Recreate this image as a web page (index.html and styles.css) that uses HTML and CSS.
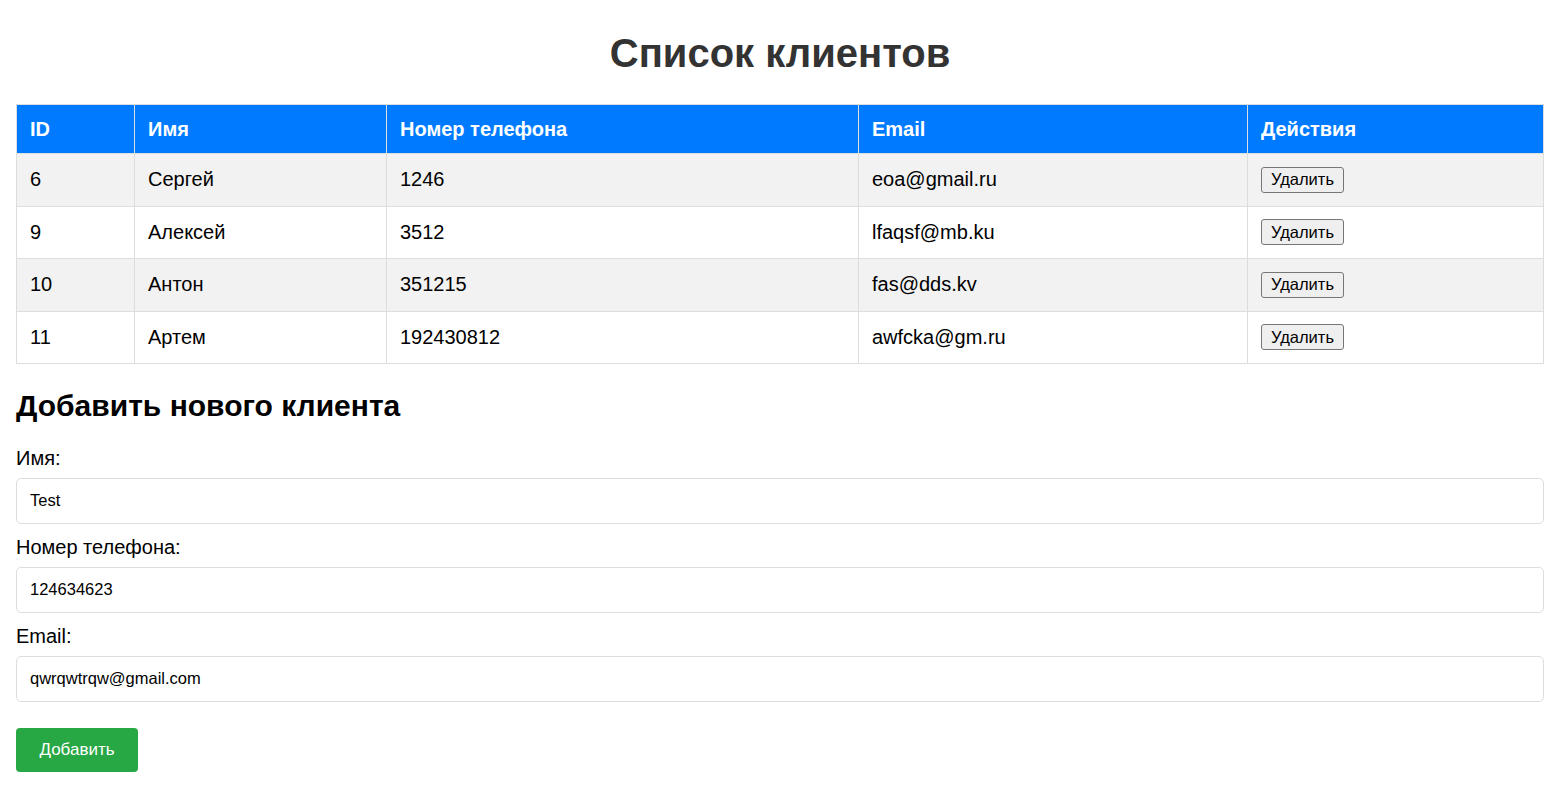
FILE: index.html
```html
<!DOCTYPE html>
<html lang="ru">
<head>
<meta charset="utf-8">
<title>Список клиентов</title>
<link rel="stylesheet" href="styles.css">
</head>
<body>
<h1 class="title">Список клиентов</h1>
<table class="clients">
  <thead>
    <tr>
      <th class="c-id">ID</th>
      <th class="c-name">Имя</th>
      <th class="c-phone">Номер телефона</th>
      <th class="c-email">Email</th>
      <th class="c-act">Действия</th>
    </tr>
  </thead>
  <tbody>
    <tr><td>6</td><td>Сергей</td><td>1246</td><td>eoa@gmail.ru</td><td><button class="del">Удалить</button></td></tr>
    <tr><td>9</td><td>Алексей</td><td>3512</td><td>lfaqsf@mb.ku</td><td><button class="del">Удалить</button></td></tr>
    <tr><td>10</td><td>Антон</td><td>351215</td><td>fas@dds.kv</td><td><button class="del">Удалить</button></td></tr>
    <tr><td>11</td><td>Артем</td><td>192430812</td><td>awfcka@gm.ru</td><td><button class="del">Удалить</button></td></tr>
  </tbody>
</table>
<h2 class="subtitle">Добавить нового клиента</h2>
<form class="form">
  <label class="label" for="name">Имя:</label>
  <input class="input" id="name" type="text" value="Test">
  <label class="label" for="phone">Номер телефона:</label>
  <input class="input" id="phone" type="text" value="124634623">
  <label class="label" for="email">Email:</label>
  <input class="input" id="email" type="text" value="qwrqwtrqw@gmail.com">
  <button class="add" type="button">Добавить</button>
</form>
</body>
</html>
```
FILE: styles.css
```css
html, body {
  background: #fff;
}
body {
  margin: 0;
  padding: 16px 6px 16px 16px;
  font-family: "Liberation Sans", Arial, sans-serif;
  color: #000;
}
.title {
  text-align: center;
  color: #333;
  font-size: 40px;
  line-height: 46px;
  margin: 14px 0 28px;
}
.clients {
  width: 100%;
  border-collapse: collapse;
  font-size: 20px;
}
.clients th, .clients td {
  border: 1px solid #ddd;
  padding: 12.75px 13px;
  line-height: 23px;
  text-align: left;
}
.clients th {
  background: #007bff;
  color: #fff;
  font-weight: bold;
  padding-top: 12.5px;
  padding-bottom: 12.5px;
}
.clients tbody tr:nth-child(odd) {
  background: #f2f2f2;
}
.clients td {
  height: 26px;
}
.c-id { width: 91px; }
.c-name { width: 225px; }
.c-phone { width: 445px; }
.c-email { width: 362px; }
.del {
  font-family: "Liberation Sans", Arial, sans-serif;
  font-size: 16.5px;
  line-height: 19px;
  height: 26px;
  padding: 2px 9px;
  background: #efefef;
  border: 1px solid #767676;
  border-radius: 3px;
  color: #000;
  vertical-align: middle;
}
.subtitle {
  font-size: 30px;
  line-height: 34.5px;
  margin: 24.5px 0 24px;
}
.form {
  display: flex;
  flex-direction: column;
  align-items: flex-start;
}
.label {
  font-size: 20px;
  line-height: 23px;
  margin-bottom: 7.5px;
}
.input {
  width: 100%;
  box-sizing: border-box;
  height: 46px;
  padding: 0 13px;
  border: 1px solid #ddd;
  border-radius: 5px;
  font-family: "Liberation Sans", Arial, sans-serif;
  font-size: 16.5px;
  margin: 0 0 12.5px;
  color: #000;
  background: #fff;
}
.add {
  margin-top: 13.5px;
  background: #28a745;
  color: #fff;
  border: none;
  border-radius: 4px;
  width: 122px;
  height: 44px;
  font-family: "Liberation Sans", Arial, sans-serif;
  font-size: 17px;
}
```
